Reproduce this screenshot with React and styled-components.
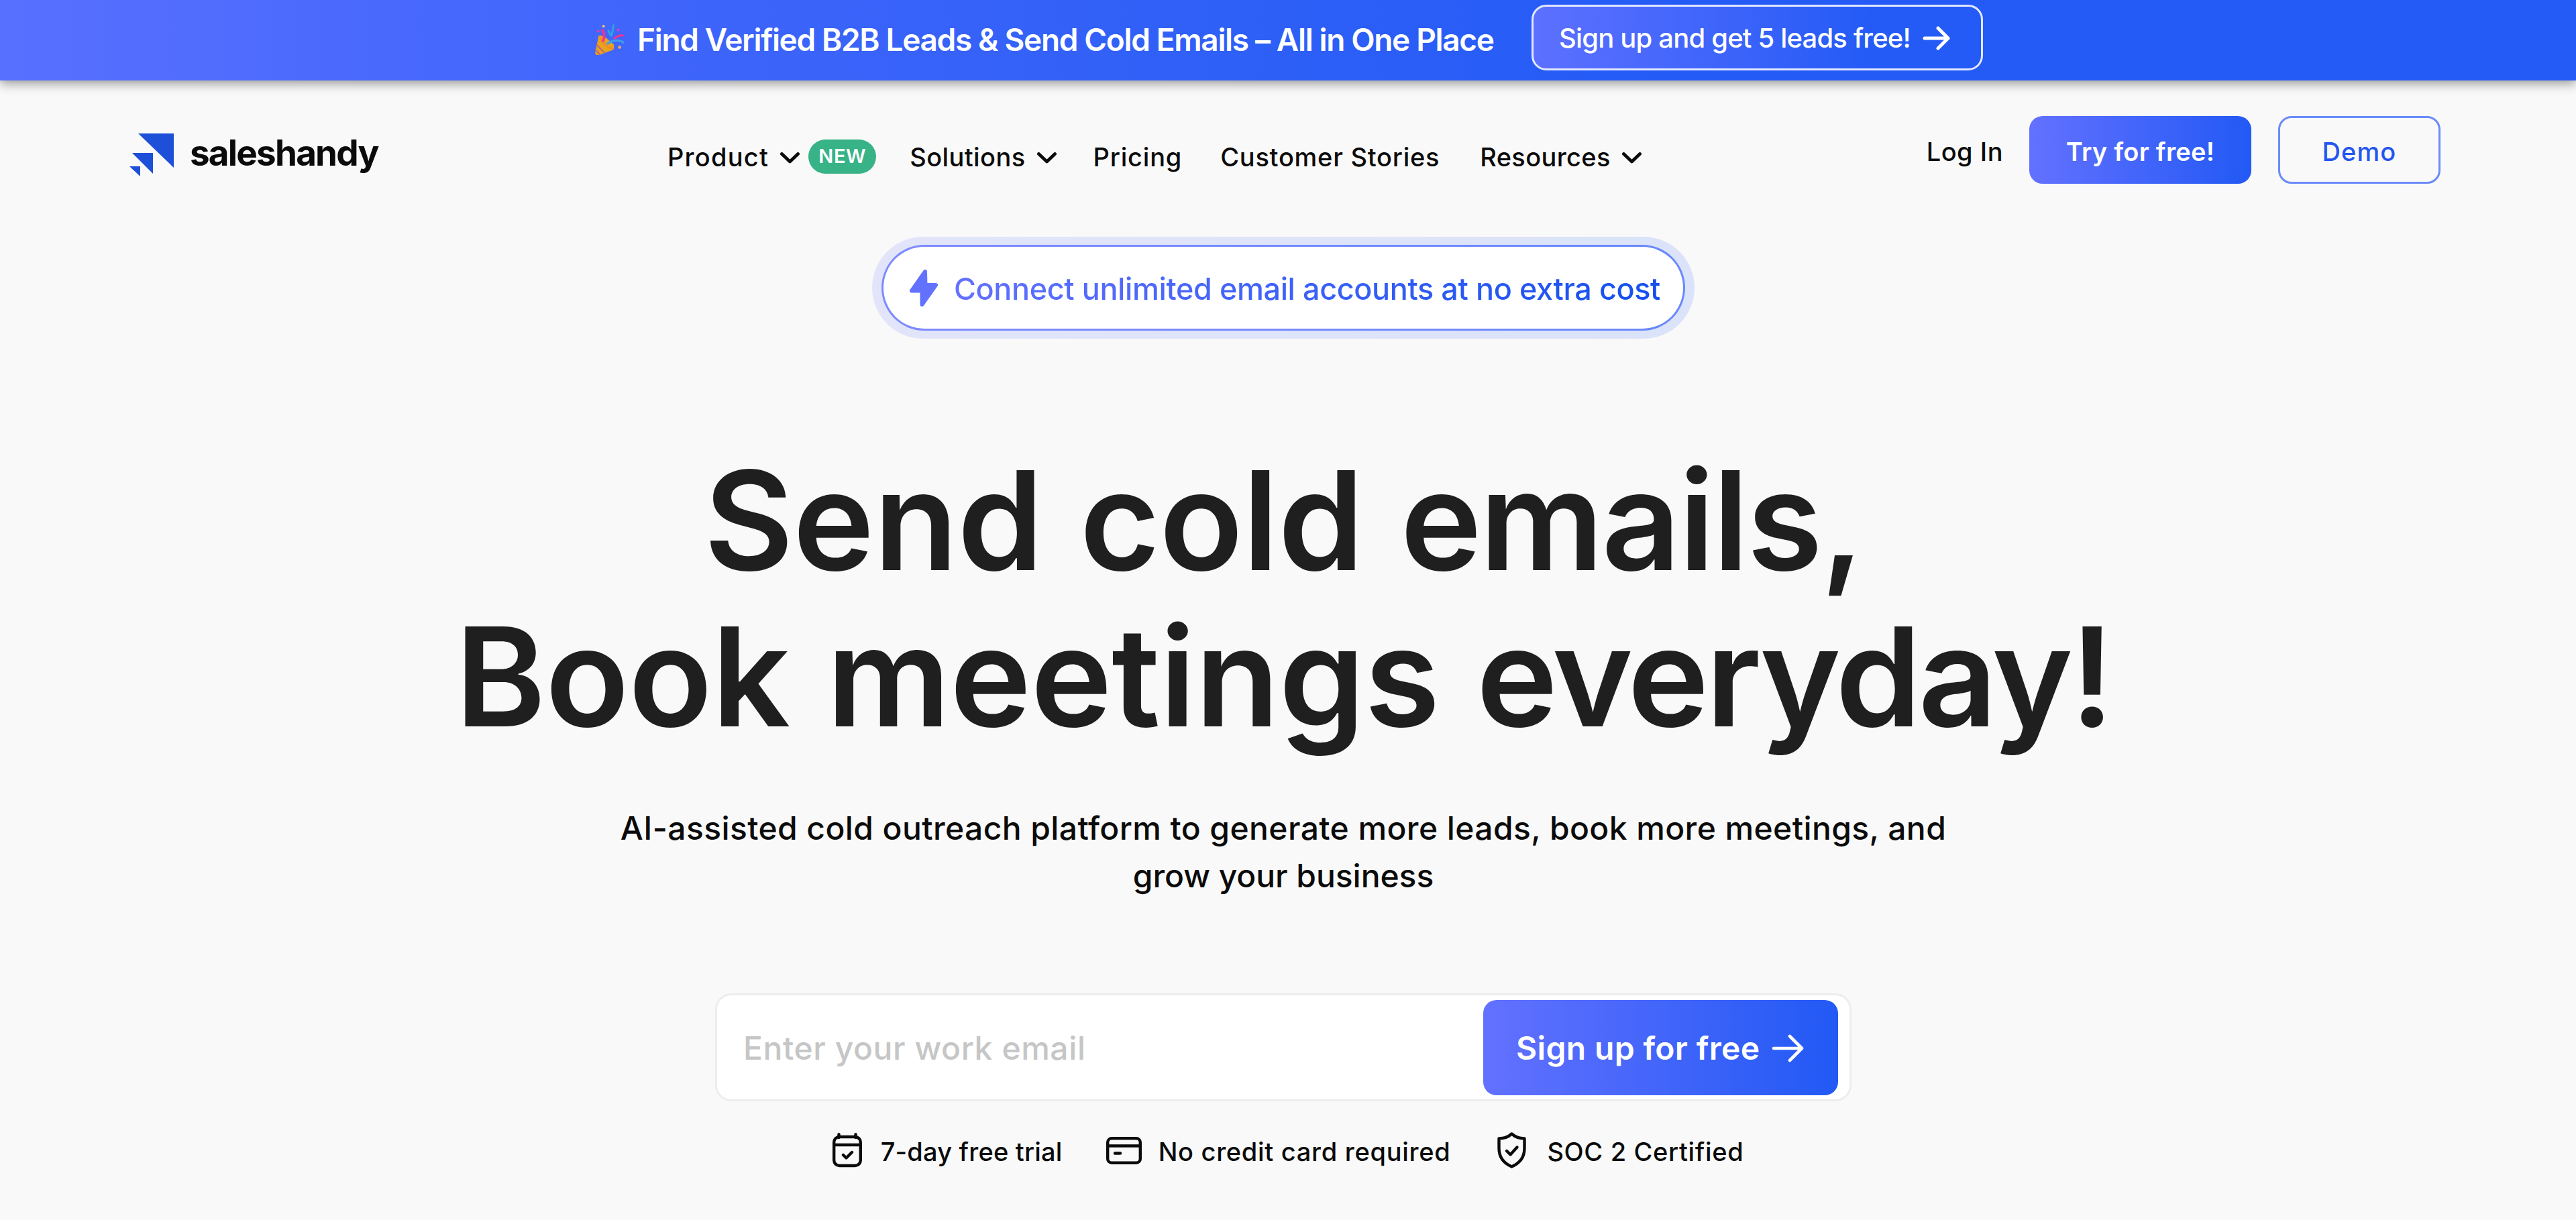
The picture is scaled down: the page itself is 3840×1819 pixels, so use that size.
import React from "react";
import styled, { createGlobalStyle } from "styled-components";

const GlobalStyle = createGlobalStyle`
  * {
    box-sizing: border-box;
  }

  body {
    margin: 0;
    background: #f9f9f9;
    color: #0b0b0b;
    font-family: "Inter", "Liberation Sans", sans-serif;
    font-weight: 500;
  }

  svg {
    display: block;
    flex-shrink: 0;
  }
`;

const Page = styled.div`
  height: 1819px;
  overflow: hidden;
`;

// top banner
const Banner = styled.div`
  position: relative;
  display: flex;
  align-items: flex-start;
  height: 120px;
  padding-left: 887px;
  background: linear-gradient(90deg, #5870ff 0%, #3f65fb 25%, #2d5ff7 50%, #245bf6 65%);
  box-shadow: 0 4px 16px rgba(0, 0, 0, 0.42);
  color: #fff;

  .confetti {
    margin-top: 35px;
  }

  p {
    width: 1278px;
    margin: 39px 55px 0 19px;
    font-size: 46px;
    font-weight: 600;
    line-height: 40px;
    letter-spacing: -1.35px;
    white-space: nowrap;
  }
`;

const BannerButton = styled.button`
  display: flex;
  align-items: center;
  width: 673px;
  height: 98px;
  margin-top: 7px;
  padding: 1px 0 0 38px;
  border: 3px solid #e3e8ff;
  border-radius: 22px;
  background: linear-gradient(90deg, #5d70ff 0%, #245bf6 75%);
  color: #fff;
  font: inherit;
  font-size: 40px;
  letter-spacing: -0.82px;
  white-space: nowrap;

  svg {
    margin-left: 18px;
  }
`;

// navigation
const Header = styled.header`
  display: flex;
  align-items: flex-start;
  padding: 53px 202px 0 193px;
  font-size: 38px;
`;

const Logo = styled.div`
  display: flex;
  width: 802px;
  margin-top: 26px;

  span {
    margin-left: 24px;
    font-size: 53px;
    font-weight: 700;
    line-height: 59px;
    letter-spacing: -1.82px;
  }
`;

const Nav = styled.nav`
  display: flex;
  margin-top: 38px;
  line-height: 40px;
`;

const NavItem = styled.div`
  display: flex;
  align-items: center;
  margin-left: ${(p) => p.$gap || 0}px;
  letter-spacing: ${(p) => p.$spacing}px;
  white-space: nowrap;

  svg {
    margin: 3px 0 0 17px;
  }
`;

const Badge = styled.span`
  width: 101px;
  height: 51px;
  margin: -3px 0 -3px 13px;
  border-radius: 26px;
  background: #37b387;
  color: #fff;
  font-size: 29px;
  font-weight: 600;
  line-height: 50px;
  letter-spacing: 0.5px;
  text-align: center;
`;

const Actions = styled.div`
  display: flex;
  align-items: center;
  height: 101px;
  margin-left: auto;
`;

const LogIn = styled.a`
  padding-top: 4px;
  letter-spacing: 0.5px;
`;

const HeaderButton = styled.button`
  width: ${(p) => (p.$primary ? 331 : 242)}px;
  height: 101px;
  margin-left: ${(p) => (p.$primary ? 39 : 40)}px;
  padding: 4px 0 0;
  border: ${(p) => (p.$primary ? "none" : "3px solid #6b8bfa")};
  border-radius: 20px;
  background: ${(p) => (p.$primary ? "linear-gradient(90deg, #6371ff, #2259f5)" : "transparent")};
  color: ${(p) => (p.$primary ? "#fff" : "#2455f0")};
  font: inherit;
  font-weight: ${(p) => (p.$primary ? 600 : 500)};
  letter-spacing: ${(p) => (p.$primary ? 0.24 : 1.1)}px;
`;

// hero
const Hero = styled.main`
  display: flex;
  flex-direction: column;
  align-items: center;
  padding: 79px 14px 0 0;
`;

const PillRing = styled.div`
  width: 1226px;
  height: 152px;
  padding: 12px 14px;
  border-radius: 76px;
  background: linear-gradient(90deg, #e2e5fa, #dae3f9);
`;

const Pill = styled.div`
  display: flex;
  align-items: center;
  height: 128px;
  padding-left: 39px;
  border: 3px solid transparent;
  border-radius: 64px;
  background: linear-gradient(#fff, #fff) padding-box,
    linear-gradient(90deg, #7f8aff, #6a88fa) border-box;

  span {
    margin: 3px 0 0 24px;
    background: linear-gradient(90deg, #6371ff, #1450ee);
    background-clip: text;
    color: transparent;
    font-size: 45px;
    line-height: 60px;
    letter-spacing: -0.41px;
    white-space: nowrap;
  }
`;

const Title = styled.h1`
  margin: 154px 0 0;
  color: #1f1f1f;
  font-size: 205px;
  font-weight: 600;
  line-height: 233px;
  letter-spacing: -0.7px;
  word-spacing: 4px;
  text-align: center;
  white-space: nowrap;
`;

const Tight = styled.span`
  letter-spacing: ${(p) => p.$spacing}px;
`;

const Subtitle = styled.p`
  margin: 74px 0 0;
  font-size: 48px;
  line-height: 71px;
  letter-spacing: 0.4px;
  text-align: center;
`;

const SignUpForm = styled.div`
  display: flex;
  align-items: center;
  width: 1694px;
  height: 161px;
  margin-top: 140px;
  padding: 0 17px 0 39px;
  border: 3px solid #ededed;
  border-radius: 24px;
  background: #fff;

  input {
    flex: 1;
    min-width: 0;
    padding: 2px 0 0;
    border: none;
    outline: none;
    background: transparent;
    font: inherit;
    font-size: 48px;
    letter-spacing: 0.58px;
  }

  input::placeholder {
    color: #c6c6c6;
    opacity: 1;
  }
`;

const SubmitButton = styled.button`
  display: flex;
  align-items: center;
  width: 529px;
  height: 142px;
  padding: 2px 0 0 49px;
  border: none;
  border-radius: 20px;
  background: linear-gradient(90deg, #6371ff, #2259f5);
  color: #fff;
  font: inherit;
  font-size: 48px;
  font-weight: 600;
  letter-spacing: 0.34px;
  white-space: nowrap;

  svg {
    margin-left: 18px;
  }
`;

const Features = styled.div`
  display: flex;
  align-items: center;
  height: 50px;
  margin: 48px 0 0 14px;
  font-size: 38px;
`;

const Feature = styled.div`
  display: flex;
  align-items: center;
  margin-left: ${(p) => p.$gap || 0}px;
  letter-spacing: ${(p) => p.$spacing}px;
  white-space: nowrap;

  span {
    margin: 3px 0 0 ${(p) => p.$textGap}px;
  }
`;

const Chevron = () => (
  <svg width="29" height="17" viewBox="0 0 29 17" fill="none" stroke="#0b0b0b" strokeWidth="4.8" strokeLinecap="round" strokeLinejoin="round">
    <path d="M2.5 2.5 14.5 14 26.5 2.5" />
  </svg>
);

const Arrow = ({ width, height, stroke }) => (
  <svg width={width} height={height} viewBox={`0 0 ${width} ${height}`} fill="none" stroke="#fff" strokeWidth={stroke} strokeLinecap="round" strokeLinejoin="round">
    <path d={`M3 ${height / 2}H${width - 3}M${width - height / 2} 3 ${width - 3} ${height / 2} ${width - height / 2} ${height - 3}`} />
  </svg>
);

const Confetti = () => (
  <svg className="confetti" width="44" height="48" viewBox="50 45 132 145" fill="none" strokeLinecap="round">
    <path d="M66 100 Q84 96 104 114 L135 140 Q136 158 130 164 L92 178 Q70 190 54 186 L50 178 Z" fill="#e9a21c" />
    <path d="M58 142 92 177M52 164 72 185" stroke="#b9707a" strokeWidth="7" />
    <path d="M72 108Q80 142 130 160" stroke="#f08a2c" strokeWidth="7" />
    <path d="M84 76Q96 96 86 124" stroke="#f5318f" strokeWidth="11" />
    <path d="M133 53Q130 78 123 100M110 78 120 98" stroke="#2fa3e0" strokeWidth="9" />
    <path d="M138 112Q152 98 176 99" stroke="#f5318f" strokeWidth="9" />
    <path d="M106 136Q128 120 150 122T176 130" stroke="#3d9df0" strokeWidth="10" />
    <circle cx="88" cy="57" r="6" fill="#f2c066" />
    <circle cx="64" cy="80" r="6" fill="#d53fb4" />
    <circle cx="154" cy="74" r="6" fill="#d53fb4" />
    <circle cx="160" cy="152" r="7" fill="#e6a66a" />
  </svg>
);

const LogoMark = () => (
  <svg width="66" height="64" viewBox="0 0 66 64" fill="#1d4fd8">
    <path d="M13 0H66V51Z" />
    <path d="M4 29H35V60Z" />
    <path d="M0 49H16V64Z" />
  </svg>
);

const Bolt = () => (
  <svg width="42" height="55" viewBox="0 0 42 55" fill="#6371ff" stroke="#6371ff" strokeWidth="6" strokeLinejoin="round">
    <path d="M23 3 3 31.5H18.500V52L39 23H23.500Z" />
  </svg>
);

const CalendarIcon = () => (
  <svg width="44" height="52" viewBox="0 0 44 52" fill="none" stroke="#0b0b0b" strokeWidth="4.4" strokeLinecap="round" strokeLinejoin="round">
    <rect x="2.200" y="6" width="39.600" height="43" rx="8" />
    <path d="M2 18H42M9.500 2.200V7M34.500 2.200V7M16 33 20.500 37.500 29 29" />
  </svg>
);

const CardIcon = () => (
  <svg width="53" height="41" viewBox="0 0 53 41" fill="none" stroke="#0b0b0b" strokeWidth="4.4" strokeLinecap="round">
    <rect x="2.200" y="2.200" width="48.600" height="36.600" rx="6" />
    <path d="M2 13.500H51M13 24.500H21" />
  </svg>
);

const ShieldIcon = () => (
  <svg width="43" height="54" viewBox="0 0 43 54" fill="none" stroke="#0b0b0b" strokeWidth="4.4" strokeLinecap="round" strokeLinejoin="round">
    <path d="M21.500 2.500C16 7.500 10 9.500 2.500 9.500V24C2.500 38 10 46.500 21.500 51.500 33 46.500 40.500 38 40.500 24V9.500C33 9.500 27 7.500 21.500 2.500Z" />
    <path d="M14 28 19.500 33.500 29.500 22.500" />
  </svg>
);

function App() {
  return (
    <Page>
      <GlobalStyle />
      <Banner>
        <Confetti />
        <p>Find Verified B2B Leads &amp; Send Cold Emails – All in One Place</p>
        <BannerButton>
          Sign up and get 5 leads free!
          <Arrow width={41} height={36} stroke={5} />
        </BannerButton>
      </Banner>

      <Header>
        <Logo>
          <LogoMark />
          <span>saleshandy</span>
        </Logo>
        <Nav>
          <NavItem $spacing={1.24}>
            Product
            <Chevron />
            <Badge>NEW</Badge>
          </NavItem>
          <NavItem $gap={50} $spacing={0.4}>
            Solutions
            <Chevron />
          </NavItem>
          <NavItem $gap={55} $spacing={0.8}>Pricing</NavItem>
          <NavItem $gap={57} $spacing={0.74}>Customer Stories</NavItem>
          <NavItem $gap={60} $spacing={0.34}>
            Resources
            <Chevron />
          </NavItem>
        </Nav>
        <Actions>
          <LogIn>Log In</LogIn>
          <HeaderButton $primary>Try for free!</HeaderButton>
          <HeaderButton>Demo</HeaderButton>
        </Actions>
      </Header>

      <Hero>
        <PillRing>
          <Pill>
            <Bolt />
            <span>Connect unlimited email accounts at no extra cost</span>
          </Pill>
        </PillRing>
        <Title>
          Send cold <Tight $spacing={-2.8}>emails,</Tight>
          <br />
          Book meetings <Tight $spacing={-4.3}>everyday!</Tight>
        </Title>
        <Subtitle>
          AI-assisted cold outreach platform to generate more leads, book more meetings, and
          <br />
          <Tight $spacing={-0.05}>grow your business</Tight>
        </Subtitle>
        <SignUpForm>
          <input type="email" placeholder="Enter your work email" />
          <SubmitButton>
            Sign up for free
            <Arrow width={48} height={42} stroke={4.6} />
          </SubmitButton>
        </SignUpForm>
        <Features>
          <Feature $spacing={0.2} $textGap={28}>
            <CalendarIcon />
            <span>7-day free trial</span>
          </Feature>
          <Feature $gap={65} $spacing={0.7} $textGap={25}>
            <CardIcon />
            <span>No credit card required</span>
          </Feature>
          <Feature $gap={70} $spacing={0.65} $textGap={31}>
            <ShieldIcon />
            <span>SOC 2 Certified</span>
          </Feature>
        </Features>
      </Hero>
    </Page>
  );
}

export default App;
